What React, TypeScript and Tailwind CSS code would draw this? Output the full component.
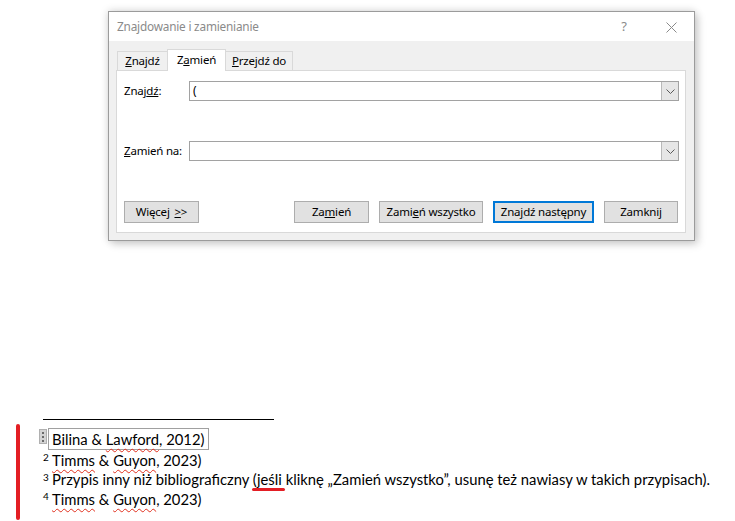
const ui = { fontFamily: '"Noto Sans", "Open Sans", sans-serif' };
const doc = { fontFamily: 'Lato, "Noto Sans", sans-serif' };

function Combo({ value }: { value?: string }) {
  return (
    <div className="flex-1 h-[20px] border border-[#a2a2a2] bg-white flex items-center">
      <div className="flex-1 pl-[3px] text-[12px] leading-[18px] text-black">{value}</div>
      <div className="w-[17px] h-[18px] bg-[#e6e6e6] border-l border-[#b9b9b9] flex items-center justify-center">
        <svg width="9" height="5" viewBox="0 0 9 5">
          <path d="M0.5 0.5 L4.5 4.5 L8.5 0.5" fill="none" stroke="#5a5a5a" strokeWidth="1" />
        </svg>
      </div>
    </div>
  );
}

function Btn({ children, w, def }: { children: React.ReactNode; w: string; def?: boolean }) {
  return (
    <div
      className={`${w} h-[22px] flex items-center justify-center text-[11.5px] tracking-[-0.2px] text-black bg-[#e1e1e1] ${
        def ? "border-2 border-[#0078d7]" : "border border-[#adadad]"
      }`}
    >
      <span>{children}</span>
    </div>
  );
}

const wavy = "underline decoration-wavy decoration-[#e0301e] decoration-1 underline-offset-[3px]";

export default function App() {
  return (
    <div className="relative w-[735px] h-[521px] bg-white overflow-hidden">
      <div className="pt-[11px] pl-[108px]" style={ui}>
        <div className="w-[587px] h-[230px] border border-[#9b9b9b] bg-[#f0f0f0] flex flex-col shadow-[0_0_8px_rgba(0,0,0,0.18),4px_4px_8px_rgba(0,0,0,0.12)]">
          {/* title bar */}
          <div className="h-[29px] bg-white flex items-center pl-[8px] pr-[17px] pt-[1px]">
            <div className="flex-1 text-[11.8px] tracking-[-0.2px] text-[#8a8a8a]">Znajdowanie i zamienianie</div>
            <div className="text-[13px] text-[#8a8a8a] mr-[39px]">?</div>
            <svg width="11" height="11" viewBox="0 0 11 11">
              <path d="M0.5 0.5 L10.5 10.5 M10.5 0.5 L0.5 10.5" stroke="#8a8a8a" strokeWidth="1" />
            </svg>
          </div>
          {/* body */}
          <div className="flex-1 pt-[8px] pl-[7px] pr-[8px] text-[11.5px] tracking-[-0.2px]">
            <div className="flex items-end h-[22px] relative z-10">
              <div className="ml-[1px] w-[50px] h-[19px] mb-px border-l border-t border-[#d9d9d9] bg-[#f0f0f0] flex items-center justify-center text-black">
                <span><u>Z</u>najdź</span>
              </div>
              <div className="w-[59px] h-[22px] border-l border-t border-r border-[#d9d9d9] bg-white flex items-center justify-center text-black pb-[1px]">
                <span>Z<u>a</u>mień</span>
              </div>
              <div className="w-[67px] h-[19px] mb-px border-t border-r border-[#d9d9d9] bg-[#f0f0f0] flex items-center justify-center text-black">
                <span><u>P</u>rzejdź do</span>
              </div>
            </div>
            <div className="-mt-px w-[570px] h-[163px] border border-[#d9d9d9] bg-white flex flex-col pl-[7px] pr-[6px] pt-[10px]">
              <div className="flex items-center">
                <div className="w-[65px] text-black">Znaj<u>dź</u>:</div>
                <Combo value="(" />
              </div>
              <div className="flex items-center mt-[40px]">
                <div className="w-[65px] text-black"><u>Z</u>amień na:</div>
                <Combo />
              </div>
              <div className="flex items-center justify-between mt-[40px] pr-[1px]">
                <Btn w="w-[75px]">Więcej <u className="ml-[2px]">&gt;</u>&gt;</Btn>
                <div className="flex gap-[10px]">
                  <Btn w="w-[75px]">Za<u>m</u>ień</Btn>
                  <Btn w="w-[104px]">Zami<u>e</u>ń wszystko</Btn>
                  <Btn w="w-[101px]" def>Zna<u>j</u>dź następny</Btn>
                  <Btn w="w-[74px]">Zamknij</Btn>
                </div>
              </div>
            </div>
          </div>
        </div>
      </div>

      {/* footnotes */}
      <div className="mt-[178px] text-[14.8px] text-black" style={doc}>
        <div className="ml-[43px] w-[231px] h-px bg-black" />
        <div className="mt-[8px] ml-[39px] flex items-start h-[22px]">
          <div className="w-[8px] h-[15px] mt-px bg-[#d4d4d4] border border-[#b0b0b0] flex flex-col items-center justify-center gap-[2px]">
            <div className="w-[2px] h-[2px] bg-[#6b6b6b]" />
            <div className="w-[2px] h-[2px] bg-[#6b6b6b]" />
            <div className="w-[2px] h-[2px] bg-[#6b6b6b]" />
          </div>
          <div className="ml-[1px] h-[22px] border border-[#a0a0a0] pl-[3px] pr-[4px] flex items-center leading-[20px]">
            <span>Bilina &amp; <span className={wavy}>Lawford</span>, 2012)</span>
          </div>
        </div>
        <div className="ml-[43px] flex h-[20px] leading-[20px]">
          <span className="w-[9px] text-[10px] leading-[14px]">2</span>
          <span><span className={wavy}>Timms</span> &amp; <span className={wavy}>Guyon</span>, 2023)</span>
        </div>
        <div className="ml-[43px] flex h-[19px] leading-[19px]">
          <span className="w-[9px] text-[10px] leading-[14px]">3</span>
          <span>
            Przypis inny niż bibliograficzny{" "}
            <span className="relative">
              (jeśli
              <span className="absolute left-[-1px] right-[-3px] top-[18px] h-[3px] rounded-full bg-[#e31e24]" />
            </span>{" "}
            kliknę „Zamień wszystko”, usunę też nawiasy w takich przypisach).
          </span>
        </div>
        <div className="ml-[43px] flex h-[20px] leading-[20px]">
          <span className="w-[9px] text-[10px] leading-[14px]">4</span>
          <span><span className={wavy}>Timms</span> &amp; <span className={wavy}>Guyon</span>, 2023)</span>
        </div>
      </div>

      <div className="absolute left-[16px] top-[424px] w-[4px] h-[96px] rounded-full bg-[#e31e24]" />
    </div>
  );
}
